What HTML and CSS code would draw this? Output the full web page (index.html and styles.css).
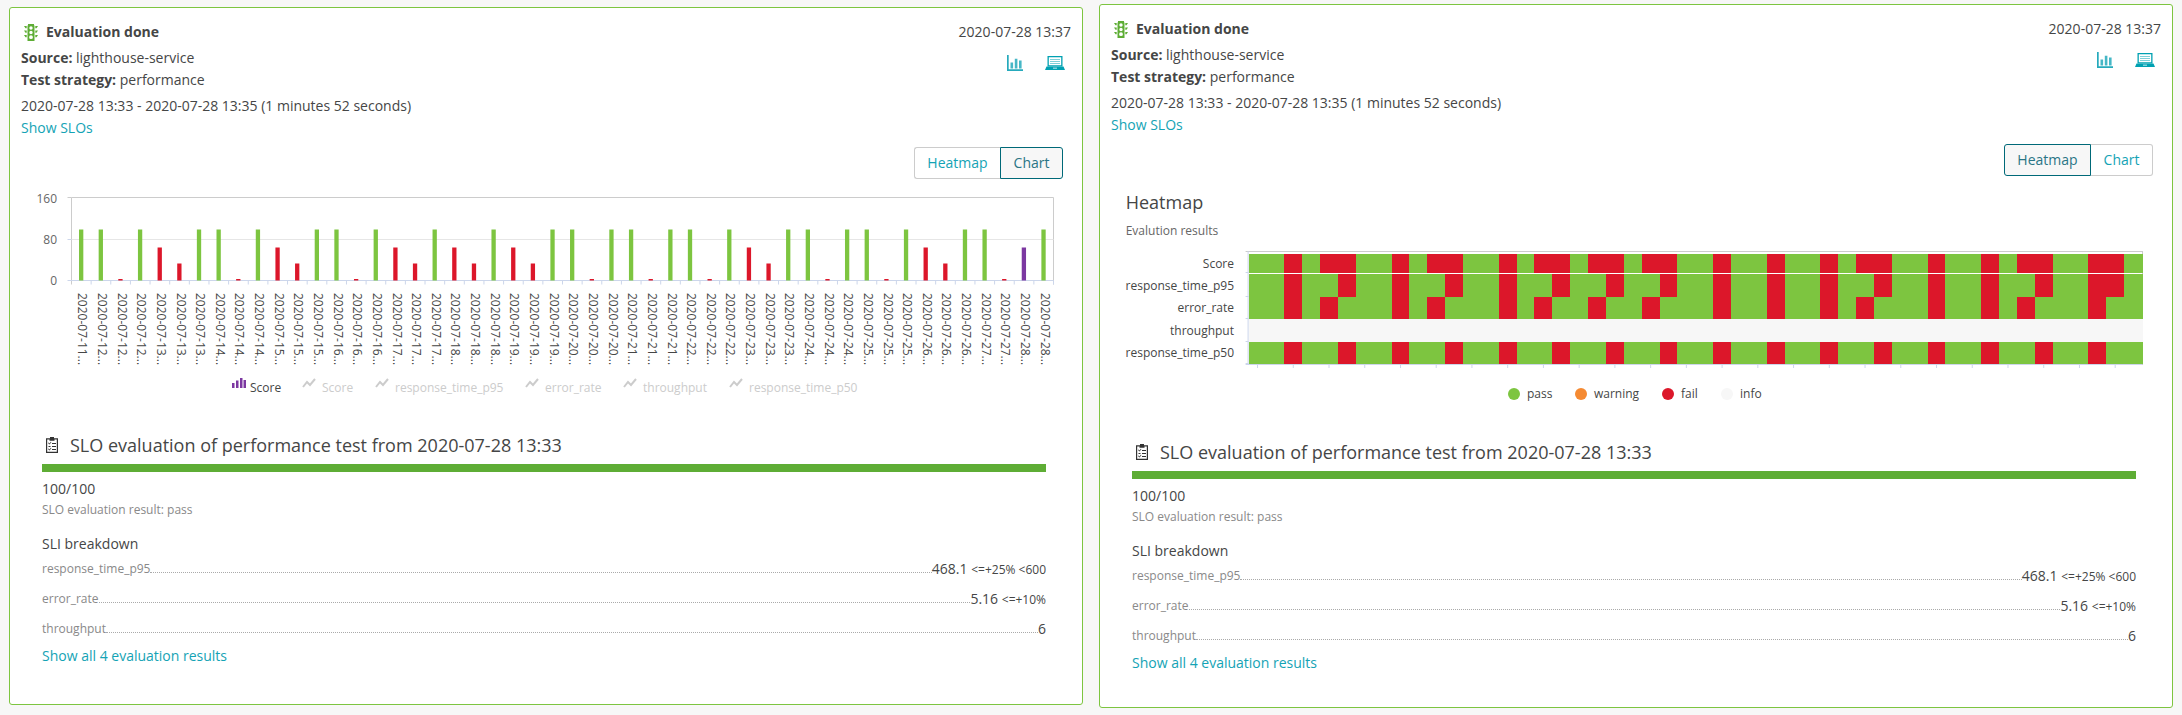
FILE: index.html
```html
<!DOCTYPE html>
<html>
<head>
  <meta charset="utf-8">
  <title>Evaluation done</title>
  <link rel="stylesheet" href="styles.css">
</head>
<body>
  <div class="page">

    <div class="card card-chart">
      <div class="head">
        <div class="info">
          <div class="title">
            <svg class="light-icon" viewBox="0 0 14 17"><use href="#light"></use></svg>
            <span>Evaluation done</span>
          </div>
          <div class="line"><b>Source:</b> lighthouse-service</div>
          <div class="line"><b>Test strategy:</b> performance</div>
          <div class="line dates">2020-07-28 13:33 - 2020-07-28 13:35 (1 minutes 52 seconds)</div>
          <a class="line link">Show SLOs</a>
        </div>
        <div class="side">
          <div class="time">2020-07-28 13:37</div>
          <div class="side-icons">
            <svg class="bars-icon" viewBox="0 0 16 16"><use href="#barsicon"></use></svg>
            <svg class="laptop-icon" viewBox="0 0 20 14"><use href="#laptop"></use></svg>
          </div>
        </div>
      </div>
      <div class="switch">
        <div class="switch-btn">Heatmap</div>
        <div class="switch-btn active">Chart</div>
      </div>
      <svg id="chart" class="plot plot-chart" width="1072" height="245"></svg>
      <div class="slo">
        <div class="slo-title">
          <svg class="clip-icon" viewBox="0 0 12 16"><use href="#clip"></use></svg>
          <span>SLO evaluation of performance test from 2020-07-28 13:33</span>
        </div>
        <div class="slo-bar"></div>
        <div class="score">100/100</div>
        <div class="result">SLO evaluation result: pass</div>
        <div class="sli-title">SLI breakdown</div>
        <div class="sli-row"><span class="sli-name">response_time_p95</span><span class="dots"></span><span class="sli-val">468.1 <small>&lt;=+25% &lt;600</small></span></div>
        <div class="sli-row"><span class="sli-name">error_rate</span><span class="dots"></span><span class="sli-val">5.16 <small>&lt;=+10%</small></span></div>
        <div class="sli-row"><span class="sli-name">throughput</span><span class="dots"></span><span class="sli-val">6</span></div>
        <a class="link show-all">Show all 4 evaluation results</a>
      </div>
    </div>

    <div class="card card-heatmap">
      <div class="head">
        <div class="info">
          <div class="title">
            <svg class="light-icon" viewBox="0 0 14 17"><use href="#light"></use></svg>
            <span>Evaluation done</span>
          </div>
          <div class="line"><b>Source:</b> lighthouse-service</div>
          <div class="line"><b>Test strategy:</b> performance</div>
          <div class="line dates">2020-07-28 13:33 - 2020-07-28 13:35 (1 minutes 52 seconds)</div>
          <a class="line link">Show SLOs</a>
        </div>
        <div class="side">
          <div class="time">2020-07-28 13:37</div>
          <div class="side-icons">
            <svg class="bars-icon" viewBox="0 0 16 16"><use href="#barsicon"></use></svg>
            <svg class="laptop-icon" viewBox="0 0 20 14"><use href="#laptop"></use></svg>
          </div>
        </div>
      </div>
      <div class="switch">
        <div class="switch-btn active">Heatmap</div>
        <div class="switch-btn">Chart</div>
      </div>
      <svg id="heatmap" class="plot plot-heatmap" width="1072" height="258"></svg>
      <div class="slo">
        <div class="slo-title">
          <svg class="clip-icon" viewBox="0 0 12 16"><use href="#clip"></use></svg>
          <span>SLO evaluation of performance test from 2020-07-28 13:33</span>
        </div>
        <div class="slo-bar"></div>
        <div class="score">100/100</div>
        <div class="result">SLO evaluation result: pass</div>
        <div class="sli-title">SLI breakdown</div>
        <div class="sli-row"><span class="sli-name">response_time_p95</span><span class="dots"></span><span class="sli-val">468.1 <small>&lt;=+25% &lt;600</small></span></div>
        <div class="sli-row"><span class="sli-name">error_rate</span><span class="dots"></span><span class="sli-val">5.16 <small>&lt;=+10%</small></span></div>
        <div class="sli-row"><span class="sli-name">throughput</span><span class="dots"></span><span class="sli-val">6</span></div>
        <a class="link show-all">Show all 4 evaluation results</a>
      </div>
    </div>

  </div>

  <!-- shared icons -->
  <svg class="defs" width="0" height="0">
    <symbol id="light" viewBox="0 0 14 17">
      <path fill-rule="evenodd" d="M4 0h6v1.500h.5V17h-7V1.500H4z M7 2.300a1.700 1.700 0 1 0 0 3.400a1.700 1.700 0 1 0 0-3.400z M7 6.800a1.700 1.700 0 1 0 0 3.400a1.700 1.700 0 1 0 0-3.400z M7 11.300a1.900 1.900 0 1 0 0 3.800a1.900 1.900 0 1 0 0-3.800z"/>
      <path d="M0 2h2.700v2.200H1.500zM14 2h-2.700v2.200h1.200zM0 6.500h2.700v2.200H1.500zM14 6.500h-2.700v2.200h1.200zM0 11h2.700v2.200H1.500zM14 11h-2.700v2.200h1.200z"/>
    </symbol>
    <symbol id="barsicon" viewBox="0 0 16 16">
      <path d="M0 0h1.700v14.300H16V16H0z"/>
      <path d="M3.500 7.500h2.600v6H3.500zM7.800 3.800h2.600v9.700H7.800zM12 5.500h2.600v8H12z" opacity=".85"/>
    </symbol>
    <symbol id="laptop" viewBox="0 0 20 14">
      <path fill-rule="evenodd" d="M2.500 0h15v10.500h-15z M3.800 1.300v8h12.400v-8z"/>
      <path d="M5 3h10v1H5zM5 5h10v1H5zM5 7h10v1H5z" opacity=".5"/>
      <path fill-rule="evenodd" d="M1.500 10.500h17l1.500 3.500H0z M8 11.800v.8h4v-.8z"/>
    </symbol>
    <symbol id="clip" viewBox="0 0 12 16">
      <path fill-rule="evenodd" d="M4 0h4v1.300h4V16H0V1.300h4z M1.200 2.500v12.300h9.600V2.500H8.500v1.300h-5V2.500z"/>
      <path d="M2.500 5.500l1 1 1.400-1.700 .5 .4-1.900 2.300-1.500-1.500zM6 6h4v1H6zM2.500 9h2v1h-2zM6 9h4v1H6zM2.500 11.500l1 1 1.400-1.700 .5 .4-1.900 2.300-1.500-1.500zM6 12h4v1H6z"/>
    </symbol>
  </svg>

  <script src="charts.js"></script>
</body>
</html>
```

FILE: styles.css
```css
* {
  box-sizing: border-box;
}
body {
  margin: 0;
  background-color: #f7f7f7;
  color: #454646;
  font-family: "Open Sans", "Liberation Sans", sans-serif;
  font-size: 14px;
  line-height: 22px;
}
.page {
  display: flex;
  align-items: center;
  justify-content: space-between;
  height: 712px;
  padding: 0 9px;
}
.card {
  width: 1074px;
  flex: none;
  background-color: #fff;
  border: 1px solid #7dc540;
  border-radius: 3px;
  padding: 13px 11px 0 11px;
}
.card-chart {
  height: 698px;
}
.card-heatmap {
  height: 704px;
}
.head {
  display: flex;
  justify-content: space-between;
}
.title {
  display: flex;
  align-items: center;
  font-weight: 700;
  margin-bottom: 4px;
}
.light-icon {
  width: 14px;
  height: 17px;
  margin: 0 8px 0 3px;
  fill: #5ead35;
}
.dates {
  margin-top: 4px;
}
.line {
  display: block;
}
.link {
  color: #14a3b5;
}
.side {
  text-align: right;
}
.side-icons {
  display: flex;
  justify-content: flex-end;
  align-items: center;
  gap: 22px;
  margin: 12px 6px 0 0;
}
.bars-icon {
  width: 16px;
  height: 16px;
  fill: #26aabc;
}
.laptop-icon {
  width: 20px;
  height: 14px;
  fill: #00a1b2;
}
.switch {
  display: flex;
  justify-content: flex-end;
  margin: 8px 8px 0 0;
}
.switch-btn {
  height: 32px;
  padding: 0 12.5px;
  line-height: 30px;
  color: #14a3b5;
  border: 1px solid #ccc;
}
.switch-btn:first-child {
  border-radius: 3px 0 0 3px;
  border-right: 0;
}
.switch-btn:last-child {
  border-radius: 0 3px 3px 0;
  border-left: 0;
}
.switch-btn.active {
  color: #2a7585;
  background-color: #f7f7f7;
  border: 1px solid #006978;
}
.plot {
  display: block;
  margin: 0 -11px;
  font-size: 12px;
}
.plot text {
  fill: #454646;
}
.plot .axis-label {
  fill: #666;
}
.plot .legend-off {
  fill: #ccc;
}
.plot-chart {
  margin-top: 6px;
  margin-bottom: 2px;
}
.plot-heatmap {
  margin-bottom: 5px;
}
.slo {
  margin: 0 25px 0 21px;
}
.slo-title {
  display: flex;
  align-items: center;
  font-size: 18px;
  line-height: 26px;
}
.clip-icon {
  width: 12px;
  height: 16px;
  margin: 0 12px 0 4px;
  fill: #333;
}
.slo-bar {
  height: 8px;
  margin-top: 6px;
  background-color: #5ead35;
}
.score {
  margin-top: 6px;
}
.result {
  font-size: 12px;
  line-height: 20px;
  color: #898989;
}
.sli-title {
  margin-top: 13px;
  margin-bottom: 3px;
}
.sli-row {
  display: flex;
  margin-bottom: 7px;
}
.sli-name {
  font-size: 12px;
  color: #898989;
}
.dots {
  flex: 1;
  height: 15px;
  border-bottom: 1px dotted #aaa;
}
.sli-val small {
  font-size: 12px;
}
.show-all {
  display: block;
  margin-top: -2px;
}
.defs {
  position: absolute;
}
```

FILE: charts.js
```js
var NS = 'http://www.w3.org/2000/svg';
var GREEN = '#7dc540', RED = '#dc172a', PURPLE = '#7c38a1';

function el(parent, name, attrs, text) {
  var node = document.createElementNS(NS, name);
  for (var k in attrs) node.setAttribute(k, attrs[k]);
  if (text) node.textContent = text;
  parent.appendChild(node);
  return node;
}

function line(svg, x1, y1, x2, y2, color) {
  el(svg, 'line', { x1: x1, y1: y1, x2: x2, y2: y2, stroke: color, 'stroke-width': 1 });
}

// --- bar chart, coordinates are relative to the svg ---
function drawChart() {
  var svg = document.getElementById('chart');
  var top = 12.5, base = 95.5, left = 61.5, right = 1043.5;
  var step = (right - left) / 50;

  var days = [11];
  for (var d = 12; d <= 26; d++) days.push(d, d, d);
  days.push(27, 27, 28, 28);

  // g = 100, R = 66, r = 33, t = tiny (fail), p = highlighted
  var bars = 'ggtgRrggtgRrggtgRrgRrgRrggtggtggtgRrggtggtgRrggtpg';

  line(svg, left, top, right, top, '#ccc');
  line(svg, right, top, right, base + 4, '#ccc');
  line(svg, left, top, left, base + 4, '#ccc');
  line(svg, left - 4, top, left, top, '#ccc');
  line(svg, left, 54.5, right, 54.5, '#e6e6e6');
  line(svg, left - 4, 54.5, left, 54.5, '#ccd6eb');
  line(svg, left - 4, base, right, base, '#ccd6eb');

  el(svg, 'text', { x: 47, y: 17.5, 'text-anchor': 'end', 'class': 'axis-label' }, '160');
  el(svg, 'text', { x: 47, y: 59, 'text-anchor': 'end', 'class': 'axis-label' }, '80');
  el(svg, 'text', { x: 47, y: 100, 'text-anchor': 'end', 'class': 'axis-label' }, '0');

  var heights = { g: 51, R: 33, r: 17, t: 1.5, p: 33 };
  for (var i = 0; i < 50; i++) {
    var kind = bars.charAt(i);
    var x = left + step * i;
    var color = kind == 'g' ? GREEN : kind == 'p' ? PURPLE : RED;
    el(svg, 'rect', { x: x + step / 2 - 2.3, y: base - heights[kind], width: 4.3, height: heights[kind], fill: color });
    line(svg, x + step, base, x + step, base + 4, '#ccd6eb');
    var cx = x + step / 2 + 1, label = '2020-07-' + days[i] + '...';
    el(svg, 'text', { transform: 'translate(' + (cx - 4) + ',108) rotate(90)' }, label);
  }

  // legend: the active Score bars, then the switched off lines
  var ly = 203;
  el(svg, 'path', { d: 'M222 ' + ly + 'h2.500v-5h-2.500zM226 ' + ly + 'h2.500v-7.500h-2.500zM230 ' + ly + 'h2.500v-10h-2.500zM233.500 ' + ly + 'h2.500v-8h-2.500z', fill: PURPLE });
  el(svg, 'text', { x: 240, y: ly + 4 }, 'Score');
  var legend = [
    ['Score', 312], ['response_time_p95', 385], ['error_rate', 535],
    ['throughput', 633], ['response_time_p50', 739]
  ];
  for (var j = 0; j < legend.length; j++) {
    var lx = legend[j][1] - 19;
    el(svg, 'path', { d: 'M' + lx + ' ' + (ly - 1) + 'l4 -5 l3 3 l5 -6', fill: 'none', stroke: '#ccc', 'stroke-width': 2 });
    el(svg, 'text', { x: legend[j][1], y: ly + 4, 'class': 'legend-off' }, legend[j][0]);
  }
}

// --- heatmap ---
function drawHeatmap() {
  var svg = document.getElementById('heatmap');
  var left = 148.6, right = 1042;
  var cell = (right - left) / 50;

  el(svg, 'text', { x: 25.7, y: 33, style: 'font-size:18px' }, 'Heatmap');
  el(svg, 'text', { x: 25.7, y: 58.5, 'class': 'axis-label' }, 'Evalution results');

  var rows = [
    { name: 'Score', y: 78, h: 19, fail: [2,4,5,8,10,11,14,16,17,19,20,22,23,26,29,32,34,35,38,41,43,44,47,48] },
    { name: 'response_time_p95', y: 98, h: 23, fail: [2,5,8,11,14,17,20,23,26,29,32,35,38,41,44,47,48] },
    { name: 'error_rate', y: 121, h: 22, fail: [2,4,8,10,14,16,19,22,26,29,32,34,38,41,43,47] },
    { name: 'throughput', y: 143, h: 23, empty: true },
    { name: 'response_time_p50', y: 166, h: 22, fail: [2,5,8,11,14,17,20,23,26,29,32,35,38,41,44,47] }
  ];

  line(svg, left - 3, 75.5, right, 75.5, '#ccc');
  line(svg, right + .5, 75, right + .5, 189, '#ccc');
  line(svg, left - .5, 75, left - .5, 189, '#ccd6eb');

  rows.forEach(function (row) {
    for (var c = 0; c < 50; c++) {
      var color = row.empty ? '#f7f7f7' : row.fail.indexOf(c) >= 0 ? RED : GREEN;
      el(svg, 'rect', { x: left + c * cell, y: row.y, width: cell + .5, height: row.h, fill: color, 'shape-rendering': 'crispEdges' });
    }
    el(svg, 'text', { x: 134, y: row.y + row.h / 2 + 4, 'text-anchor': 'end' }, row.name);
    line(svg, left - 3, row.y + row.h - .5, left, row.y + row.h - .5, '#ccd6eb');
  });

  line(svg, left - 3, 188.5, right, 188.5, '#ccd6eb');
  for (var t = 0; t < 50; t += 2) {
    var tx = left + cell * (t + .5);
    line(svg, tx, 189, tx, 192, '#ccd6eb');
  }

  var legend = [
    ['pass', 414, GREEN], ['warning', 481, '#f58a32'],
    ['fail', 568, RED], ['info', 627, '#f7f7f7']
  ];
  legend.forEach(function (item) {
    el(svg, 'circle', { cx: item[1], cy: 218, r: 6, fill: item[2] });
    el(svg, 'text', { x: item[1] + 13, y: 222 }, item[0]);
  });
}

drawChart();
drawHeatmap();
```
